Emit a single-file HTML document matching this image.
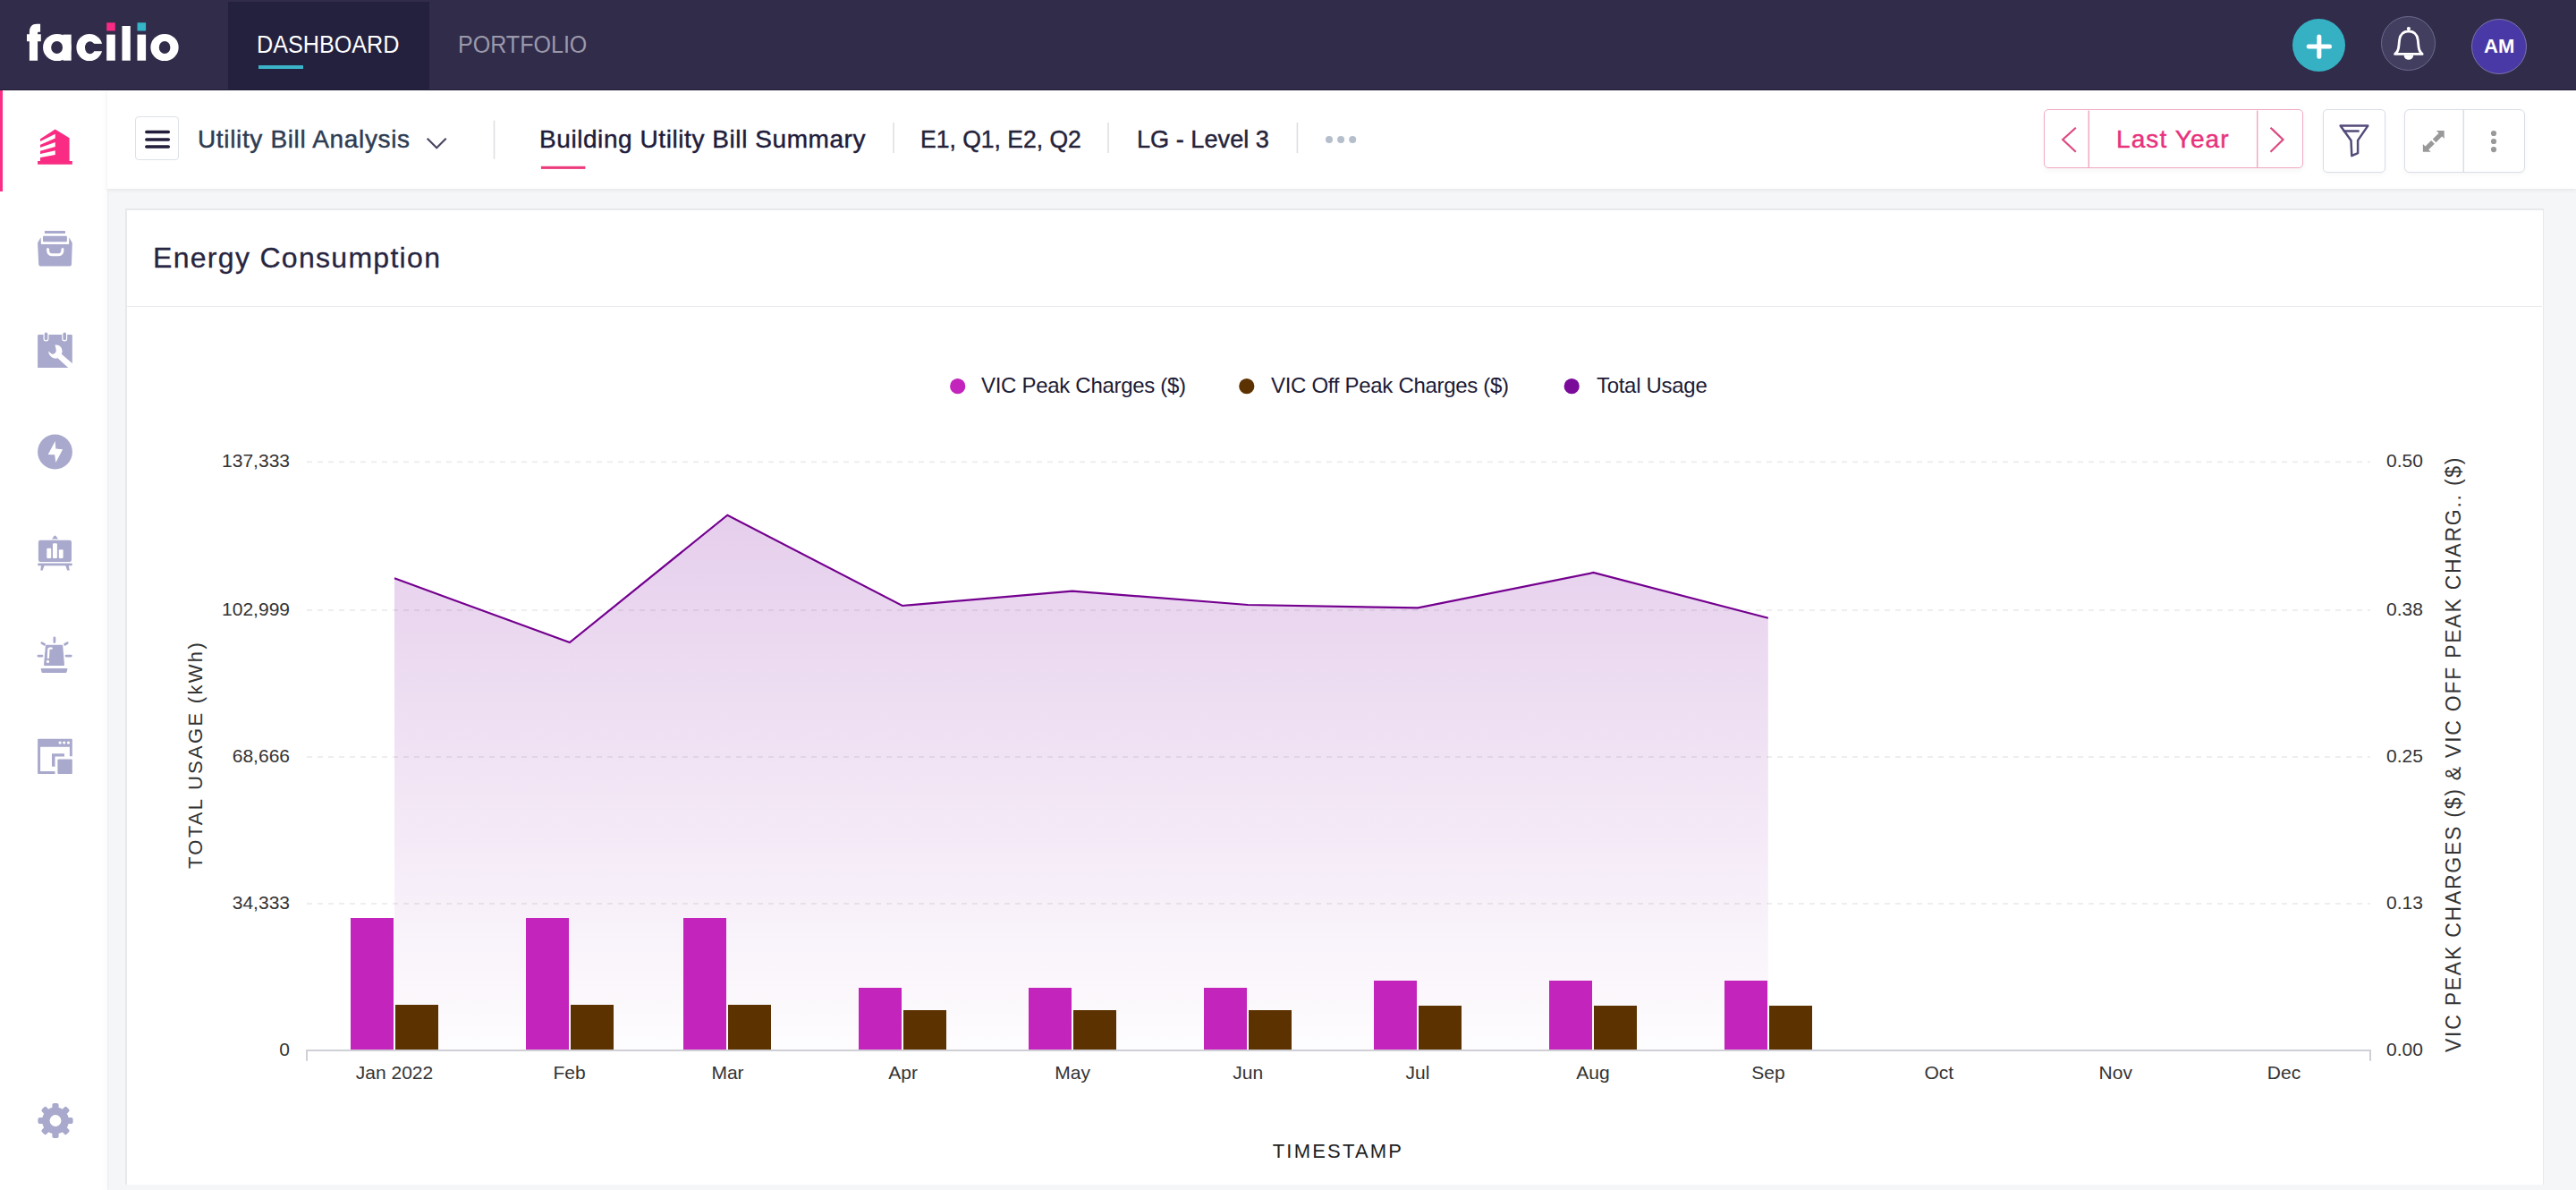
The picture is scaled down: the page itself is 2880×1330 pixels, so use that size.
<!DOCTYPE html>
<html>
<head>
<meta charset="utf-8">
<style>
html,body{margin:0;padding:0;}
body{width:2880px;height:1330px;overflow:hidden;position:relative;background:#f5f6f8;font-family:"Liberation Sans",sans-serif;}
.abs{position:absolute;}
.t{position:absolute;white-space:nowrap;line-height:1;}
.s{-webkit-text-stroke:0.45px currentColor;}
.s2{-webkit-text-stroke:0.3px currentColor;}
#hdr{left:0;top:0;width:2880px;height:100px;background:#302c4a;border-bottom:1px solid #211d36;}
#side{left:0;top:101px;width:120px;height:1229px;background:#fff;box-shadow:inset -8px 0 8px -6px rgba(0,0,0,0.025), 1px 0 2px rgba(0,0,0,0.04);}
#sub{left:120px;top:101px;width:2760px;height:110px;background:#fff;box-shadow:0 2px 4px rgba(0,0,0,0.06);}
#card{left:140px;top:233px;width:2701px;height:1089px;background:#fff;border:2px solid #e8e9eb;border-right-width:1px;border-bottom:0;}
</style>
</head>
<body>
<!-- HEADER -->
<div id="hdr" class="abs">
  <div class="abs" style="left:255px;top:2px;width:225px;height:98px;background:#23213e;"></div>
  <!-- logo -->
  <svg class="abs" style="left:0;top:0;" width="240" height="100">
    <g fill="#fff">
      <path d="M32.9 67.7 L32.9 46.3 L30 46.3 L30 38.2 L32.9 38.2 L32.9 36 C32.9 30 36 26.8 41 26.8 L45.1 26.8 L45.1 35.7 L43 35.7 C42.4 35.7 42.1 36.2 42.1 37 L42.1 38.2 L45.8 38.2 L45.8 46.3 L42.1 46.3 L42.1 67.7 Z"/>
      <ellipse cx="63.9" cy="53" rx="15.85" ry="15.1"/><rect x="70.5" y="38.6" width="9.2" height="29.1"/>
      <ellipse cx="100" cy="53" rx="14.6" ry="15.1"/>
      <rect x="119.2" y="38.6" width="9.6" height="29.1"/>
      <rect x="136.5" y="29" width="9.3" height="38.7"/>
      <rect x="153.5" y="38.6" width="9.6" height="29.1"/>
      <ellipse cx="184" cy="53" rx="15.65" ry="15.1"/>
    </g>
    <g fill="#302c4a">
      <ellipse cx="63.6" cy="53" rx="6.45" ry="7"/>
      <ellipse cx="100.6" cy="53.2" rx="5.6" ry="7"/>
      <rect x="100.5" y="48.9" width="16" height="8.3"/>
      <ellipse cx="184.1" cy="53" rx="6.3" ry="7"/>
    </g>
    <rect x="119.2" y="25.3" width="9.6" height="9.2" fill="#f72a84"/>
    <rect x="153.5" y="25.3" width="9.6" height="9.2" fill="#35b4c8"/>
  </svg>
  <div class="t" id="dash" style="left:286.8px;top:37px;font-size:27px;color:#fff;transform:scaleX(0.932);transform-origin:0 0;">DASHBOARD</div>
  <div class="abs" style="left:289px;top:73px;width:50px;height:4px;background:#3bb3c8;"></div>
  <div class="t" id="port" style="left:512.1px;top:37px;font-size:27px;color:#9c99ab;transform:scaleX(0.928);transform-origin:0 0;">PORTFOLIO</div>
  <!-- right icons -->
  <div class="abs" style="left:2563px;top:21px;width:59px;height:59px;border-radius:50%;background:#36b1c4;"></div>
  <svg class="abs" style="left:2563px;top:21px;" width="59" height="59"><path d="M29.85 19.9V42.2M18.2 31H41.5" stroke="#fff" stroke-width="5" stroke-linecap="round"/></svg>
  <div class="abs" style="left:2662px;top:18px;width:59px;height:59px;border-radius:50%;background:#423e60;border:1px solid #6e6a8c;"></div>
  <svg class="abs" style="left:2662px;top:18px;" width="61" height="61"><path d="M15.6 42.4 Q19.3 39.5 19.8 34 L20.6 26.5 Q21.6 17.2 30.9 16.8 Q40.2 17.2 41.2 26.5 L42 34 Q42.5 39.5 46.2 42.4 Z" fill="none" stroke="#fff" stroke-width="2.8" stroke-linejoin="round"/><circle cx="30.9" cy="14" r="2.1" fill="#fff"/><path d="M25.6 43.5 A5.3 5.3 0 0 0 36.2 43.5 Z" fill="#fff"/></svg>
  <div class="abs" style="left:2763px;top:21px;width:60px;height:60px;border-radius:50%;background:#4939a6;border:1px solid #7c74a8;"></div>
  <div class="t" id="am" style="left:2777px;top:41px;font-size:22px;font-weight:bold;color:#fff;">AM</div>
</div>

<!-- SIDEBAR -->
<div id="side" class="abs">
  <div class="abs" style="left:0;top:0;width:3px;height:113px;background:#fb2d86;"></div>
</div>

<!-- sidebar icons (64x64 boxes) -->
<svg class="abs" style="left:30px;top:130px;" width="64" height="64">
  <path fill="#f92b82" d="M12.1 53.8 L50.8 53.8 L50.8 50 L47.6 50 L47.6 24.2 L31.7 14.5 L15 25.3 L15 50 L12.1 50 Z"/>
  <g fill="#fff">
    <path d="M14 28.5 L31.74 19.63 L31.74 24.48 L14 32.2 Z"/>
    <path d="M14 35.3 L31.74 29.05 L31.74 33.89 L14 39.05 Z"/>
    <path d="M14 42.2 L31.74 38.19 L31.74 43.03 L14 46.2 Z"/>
  </g>
</svg>
<svg class="abs" style="left:30px;top:245px;" width="64" height="64">
  <g fill="#a9a9cd">
    <rect x="19.9" y="12.9" width="23.1" height="3" rx="0.5"/>
    <rect x="18" y="18.8" width="26.9" height="6.5" rx="1"/>
    <path d="M15.6 20.2 L15.9 28 L47.1 28 L47.3 20.2 L50.8 26.4 L50 50.5 Q49.9 52.4 48 52.4 L15.2 52.4 Q13.3 52.4 13.2 50.5 L12.1 26.4 Z"/>
  </g>
  <path d="M23.5 33.5 Q23.5 39.8 28 39.8 L35.5 39.8 Q40 39.8 40 33.5" fill="none" stroke="#fff" stroke-width="3" stroke-linecap="round"/>
</svg>
<svg class="abs" style="left:30px;top:359px;" width="64" height="64">
  <path fill="#a9a9cd" d="M13.5 15.1 L50 15.1 Q50.8 15.1 50.8 16 L50.8 51.9 L12.1 51.9 L12.1 16.5 Q12.1 15.1 13.5 15.1 Z"/>
  <g stroke="#fff" stroke-width="6" stroke-linecap="round"><path d="M21.5 14.5V19.5M42.2 14.5V19.5"/></g>
  <g stroke="#a9a9cd" stroke-width="3.6" stroke-linecap="round"><path d="M21.5 14.3V19.5M42.2 14.3V19.5"/></g>
  <path fill="#fff" d="M31.5 26.5 Q36.8 25.8 38.9 30.3 Q40.3 33.6 38.8 36.7 L53.5 49.5 L49 54.5 L34.5 41.3 Q31 42.3 28.2 40.5 Q24.4 38 24.2 33.6 L27.6 36.6 Q29.6 37.3 31.2 36.1 Q33.3 34.2 32.7 31.8 Z"/>
</svg>
<svg class="abs" style="left:30px;top:473px;" width="64" height="64">
  <circle cx="31.5" cy="32" r="19.4" fill="#a9a9cd"/>
  <path fill="#fff" d="M31.7 19.9 L23.7 35 L31.2 35.2 L32.3 44.1 L40.1 29.3 L32.3 28.6 Z"/>
</svg>
<svg class="abs" style="left:30px;top:587px;" width="64" height="64">
  <g fill="#a9a9cd">
    <path d="M28 15.6 L30.5 12 Q31.5 11 32.5 12 L35 15.6 Z"/>
    <rect x="12.9" y="16.7" width="37.1" height="24.2" rx="2.2"/>
    <rect x="12.1" y="42.5" width="38.7" height="2.7" rx="1.3"/>
    <path d="M16 45 L19.6 45 L17.7 50.6 L15.3 50.6 Z"/>
    <path d="M43.2 45 L46.8 45 L47.8 50.6 L45.2 50.6 Z"/>
  </g>
  <g fill="#fff">
    <rect x="22.3" y="25.8" width="4.9" height="11.3" rx="1"/>
    <rect x="29" y="20.2" width="4.9" height="16.9" rx="1"/>
    <rect x="35.8" y="27.2" width="4.8" height="9.9" rx="1"/>
  </g>
</svg>
<svg class="abs" style="left:30px;top:700px;" width="64" height="64">
  <g fill="#a9a9cd">
    <path d="M21.8 20.7 L39.3 20.7 Q40.1 20.7 40.2 21.5 L42 43 Q42 44.1 41 44.1 L20 44.1 Q19 44.1 19 43 L20.9 21.5 Q21 20.7 21.8 20.7 Z"/>
    <path d="M15.6 47.1 L45.5 47.1 L44.6 51 Q44.3 51.9 43.4 51.9 L17.7 51.9 Q16.8 51.9 16.5 51 Z"/>
  </g>
  <g stroke="#a9a9cd" stroke-width="2.8" stroke-linecap="round">
    <path d="M30.9 13V17.5M12.9 33.1H17M44 33.1H49.3M16.8 18.6L19.6 20.3M42.6 20.3L45.3 18.6"/>
  </g>
  <path d="M23.9 35 L24.4 25.7 Q24.5 24.6 25.6 24.6 L27.8 24.6" fill="none" stroke="#fff" stroke-width="2.3" stroke-linecap="round"/>
  <circle cx="23.5" cy="39.4" r="1.6" fill="#fff"/>
</svg>
<svg class="abs" style="left:30px;top:814px;" width="64" height="64">
  <g fill="#a9a9cd">
    <path d="M13.1 11.8 L49.8 11.8 Q50.8 11.8 50.8 12.8 L50.8 31.2 L47.9 31.2 L47.9 20.7 L15.1 20.7 L15.1 48.1 L31.5 48.1 L31.5 51.1 L13.1 51.1 Q12.1 51.1 12.1 50.1 L12.1 12.8 Q12.1 11.8 13.1 11.8 Z"/>
    <path d="M28 28.2 L42 28.2 L42 31.5 L31.5 31.5 L31.5 42.8 L28 42.8 Z"/>
    <rect x="34.4" y="34.4" width="16.4" height="16.7" rx="1.2"/>
  </g>
  <g fill="#fff"><circle cx="37.1" cy="16.1" r="1.6"/><circle cx="41.7" cy="16.1" r="1.6"/><circle cx="46.5" cy="16.1" r="1.6"/></g>
</svg>
<svg class="abs" style="left:30px;top:1220px;" width="64" height="64">
  <g transform="translate(32,32.5)" fill="#a9a9cd">
    <circle r="15"/>
    <g id="tooth"><rect x="-3.6" y="-19.6" width="7.2" height="7" rx="2"/></g>
    <use href="#tooth" transform="rotate(45)"/><use href="#tooth" transform="rotate(90)"/><use href="#tooth" transform="rotate(135)"/>
    <use href="#tooth" transform="rotate(180)"/><use href="#tooth" transform="rotate(225)"/><use href="#tooth" transform="rotate(270)"/><use href="#tooth" transform="rotate(315)"/>
    <circle r="6.4" fill="#fff"/>
  </g>
</svg>

<!-- SUBHEADER -->
<div id="sub" class="abs"></div>
<!-- subheader content (page coords) -->
<div class="abs" style="left:151px;top:130px;width:47px;height:47px;border:1.5px solid #dde1e8;border-radius:4px;background:#fff;"></div>
<svg class="abs" style="left:0;top:100px;" width="1600" height="111">
  <g stroke="#231d3d" stroke-width="3.5" stroke-linecap="round">
    <path d="M163.8 47.6H188.3M163.8 55.9H188.3M163.8 64.1H188.3"/>
  </g>
  <path d="M477.7 54.7 L488.2 65.2 L498.7 54.7" fill="none" stroke="#4b4562" stroke-width="2.2"/>
  <g stroke="#dedee2" stroke-width="1.5">
    <path d="M552.5 34.8V77.8M999 37V71M1239 37V71M1450.4 37.1V70.9"/>
  </g>
  <rect x="604.9" y="85.8" width="49.5" height="3.1" fill="#ec3b7d"/>
  <g fill="#b5bfcb"><circle cx="1486" cy="55.9" r="4"/><circle cx="1499.1" cy="55.9" r="4"/><circle cx="1512.2" cy="55.9" r="4"/></g>
</svg>
<div class="t s" id="uba" style="left:221px;top:142px;font-size:28px;letter-spacing:0.65px;color:#2e3c52;">Utility Bill Analysis</div>
<div class="t s" id="bubs" style="left:603px;top:142px;font-size:28px;letter-spacing:0.57px;color:#1f1c3b;">Building Utility Bill Summary</div>
<div class="t s" id="eq" style="left:1028.7px;top:142px;font-size:28px;transform:scaleX(0.947);transform-origin:0 0;color:#25233a;">E1, Q1, E2, Q2</div>
<div class="t s" id="lg" style="left:1270.5px;top:142px;font-size:28px;transform:scaleX(0.97);transform-origin:0 0;color:#25233a;">LG - Level 3</div>
<!-- date picker -->
<div class="abs" style="left:2285px;top:122px;width:288px;height:64px;border:1.5px solid #f1a9c3;border-radius:5px;background:#fff;box-shadow:0 3px 6px rgba(0,0,0,0.04);"></div>
<svg class="abs" style="left:2280px;top:100px;" width="600" height="111">
  <path d="M55.3 23.5V88M243.7 23.5V88" stroke="#f1a9c3" stroke-width="1.5"/>
  <path d="M40.8 42.7 L26.2 56 L40.8 69.7" fill="none" stroke="#dc4a80" stroke-width="2.2"/>
  <path d="M258.5 42.7 L272.5 56 L258.5 69.7" fill="none" stroke="#dc4a80" stroke-width="2.2"/>
</svg>
<div class="t s" id="ly" style="left:2366px;top:142px;font-size:28px;letter-spacing:1.1px;color:#e8327c;">Last Year</div>
<!-- filter -->
<div class="abs" style="left:2597px;top:122px;width:68px;height:69px;border:1.5px solid #d9dde6;border-radius:5px;background:#fff;box-shadow:0 2px 5px rgba(0,0,0,0.04);"></div>
<svg class="abs" style="left:2590px;top:115px;" width="250" height="85">
  <path d="M26.6 25.6 L57.3 25.6 L46.1 41.9 L46.1 56.1 L39.3 59.2 L38.5 41.9 Z" fill="none" stroke="#544b7a" stroke-width="2.5" stroke-linejoin="round"/>
  <path d="M30.8 31.5 H46.6" stroke="#544b7a" stroke-width="2.5" stroke-linecap="round"/>
</svg>
<!-- expand / more -->
<div class="abs" style="left:2688px;top:122px;width:133px;height:69px;border:1.5px solid #d9dde6;border-radius:6px;background:#fff;box-shadow:0 2px 5px rgba(0,0,0,0.04);"></div>
<svg class="abs" style="left:2590px;top:115px;" width="250" height="85">
  <path d="M164.3 7.5V77.5" stroke="#d9dde6" stroke-width="1.5"/>
  <g fill="#999">
    <path d="M142.7 31.1 L133.9 31.1 L142.7 39.9 Z"/><path d="M118.9 54.8 L127.7 54.8 L118.9 46 Z"/>
    <circle cx="198" cy="34" r="3.1"/><circle cx="198" cy="43" r="3.1"/><circle cx="198" cy="52.1" r="3.1"/>
  </g>
  <path d="M139 35 L131.6 42.4 M122.6 51.2 L130 43.8" stroke="#999" stroke-width="5.2"/>
</svg>

<!-- CARD -->
<div id="card" class="abs"></div>
<div class="t s2" id="ec" style="left:171px;top:272px;font-size:32px;color:#27253f;letter-spacing:1.3px;">Energy Consumption</div>
<div class="abs" style="left:141px;top:342px;width:2701px;height:1px;background:#e8eaee;"></div>
<!-- legend -->
<svg class="abs" style="left:0;top:0;" width="2880" height="1330">
  <defs>
    <linearGradient id="ag" x1="0" y1="575" x2="0" y2="1174" gradientUnits="userSpaceOnUse">
      <stop offset="0" stop-color="#7f0ba0" stop-opacity="0.2"/>
      <stop offset="1" stop-color="#7f0ba0" stop-opacity="0.01"/>
    </linearGradient>
  </defs>
  <circle cx="1070.7" cy="431.7" r="8.6" fill="#c324bc"/>
  <circle cx="1393.8" cy="431.7" r="8.6" fill="#5c3200"/>
  <circle cx="1757.2" cy="431.7" r="8.6" fill="#7a0a9a"/>
  <g stroke="#eeeeee" stroke-width="2" stroke-dasharray="6 6"><path d="M343 516.2H2650"/><path d="M343 682H2650"/><path d="M343 846.1H2650"/><path d="M343 1009.9H2650"/></g>
  <path d="M441 1174 L441 646.3 L636.9 718.1 L813.3 575.7 L1008.8 677 L1198.8 660.6 L1395 676 L1585.2 679.4 L1781.4 640 L1976.8 690.7 L1976.8 1174 Z" fill="url(#ag)"/>
  <rect x="392" y="1026" width="48" height="147" fill="#c324bc"/><rect x="442" y="1123" width="48" height="50" fill="#5c3200"/><rect x="588" y="1026" width="48" height="147" fill="#c324bc"/><rect x="638" y="1123" width="48" height="50" fill="#5c3200"/><rect x="764" y="1026" width="48" height="147" fill="#c324bc"/><rect x="814" y="1123" width="48" height="50" fill="#5c3200"/><rect x="960" y="1104" width="48" height="69" fill="#c324bc"/><rect x="1010" y="1129" width="48" height="44" fill="#5c3200"/><rect x="1150" y="1104" width="48" height="69" fill="#c324bc"/><rect x="1200" y="1129" width="48" height="44" fill="#5c3200"/><rect x="1346" y="1104" width="48" height="69" fill="#c324bc"/><rect x="1396" y="1129" width="48" height="44" fill="#5c3200"/><rect x="1536" y="1096" width="48" height="77" fill="#c324bc"/><rect x="1586" y="1124" width="48" height="49" fill="#5c3200"/><rect x="1732" y="1096" width="48" height="77" fill="#c324bc"/><rect x="1782" y="1124" width="48" height="49" fill="#5c3200"/><rect x="1928" y="1096" width="48" height="77" fill="#c324bc"/><rect x="1978" y="1124" width="48" height="49" fill="#5c3200"/>
  <path d="M441 646.3 L636.9 718.1 L813.3 575.7 L1008.8 677 L1198.8 660.6 L1395 676 L1585.2 679.4 L1781.4 640 L1976.8 690.7" fill="none" stroke="#74008f" stroke-width="2.2" stroke-linejoin="miter"/>
  <path d="M343 1185.7V1174H2650V1185.7" fill="none" stroke="#cfd0d6" stroke-width="2"/>
  <g font-family="Liberation Sans" font-size="21" fill="#333"><text x="441" y="1206" text-anchor="middle">Jan 2022</text><text x="636.5" y="1206" text-anchor="middle">Feb</text><text x="813.5" y="1206" text-anchor="middle">Mar</text><text x="1009.6" y="1206" text-anchor="middle">Apr</text><text x="1199.2" y="1206" text-anchor="middle">May</text><text x="1395.3" y="1206" text-anchor="middle">Jun</text><text x="1585.0" y="1206" text-anchor="middle">Jul</text><text x="1781.0" y="1206" text-anchor="middle">Aug</text><text x="1977.0" y="1206" text-anchor="middle">Sep</text><text x="2167.8" y="1206" text-anchor="middle">Oct</text><text x="2365.3" y="1206" text-anchor="middle">Nov</text><text x="2553.5" y="1206" text-anchor="middle">Dec</text><text x="324" y="522" text-anchor="end">137,333</text><text x="324" y="687.8" text-anchor="end">102,999</text><text x="324" y="851.9" text-anchor="end">68,666</text><text x="324" y="1015.7" text-anchor="end">34,333</text><text x="324" y="1180" text-anchor="end">0</text><text x="2668" y="522">0.50</text><text x="2668" y="687.8">0.38</text><text x="2668" y="851.9">0.25</text><text x="2668" y="1015.7">0.13</text><text x="2668" y="1180">0.00</text></g>
  <text x="0" y="0" transform="translate(225.6 843.5) rotate(-90)" text-anchor="middle" font-family="Liberation Sans" font-size="22" fill="#333" letter-spacing="2.3">TOTAL USAGE (kWh)</text>
  <text x="0" y="0" transform="translate(2751.2 842.9) rotate(-90)" text-anchor="middle" font-family="Liberation Sans" font-size="23" fill="#333" letter-spacing="1.75">VIC PEAK CHARGES ($) &amp; VIC OFF PEAK CHARG.. ($)</text>
  <text x="1496" y="1293.5" text-anchor="middle" font-family="Liberation Sans" font-size="22" fill="#222" letter-spacing="2.2">TIMESTAMP</text>
</svg>
<div class="t" id="lg1" style="left:1097px;top:419px;font-size:24px;color:#1d1b36;letter-spacing:-0.3px;">VIC Peak Charges ($)</div>
<div class="t" id="lg2" style="left:1421px;top:419px;font-size:24px;color:#1d1b36;letter-spacing:-0.3px;">VIC Off Peak Charges ($)</div>
<div class="t" id="lg3" style="left:1785px;top:419px;letter-spacing:-0.1px;font-size:24px;color:#1d1b36;letter-spacing:-0.3px;">Total Usage</div>

</body>
</html>
